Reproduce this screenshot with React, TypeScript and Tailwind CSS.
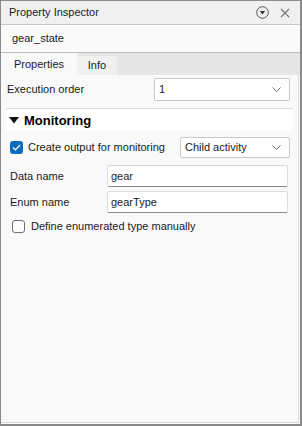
import React from 'react';

const font = { fontFamily: '"Liberation Sans", Arial, sans-serif' };

const Chevron: React.FC = () => (
  <svg width="9" height="5" viewBox="0 0 9 5" className="text-[#707070]">
    <path d="M0.5 0.5 L4.5 4.5 L8.5 0.5" fill="none" stroke="currentColor" strokeWidth="1" />
  </svg>
);

const Select: React.FC<{ value: string; className: string }> = ({ value, className }) => (
  <div
    className={`flex items-center justify-between border border-[#c9c9c9] rounded-[2px] bg-white pl-[4px] pr-[8px] ${className}`}
  >
    <span>{value}</span>
    <Chevron />
  </div>
);

const TextField: React.FC<{ value: string }> = ({ value }) => (
  <div className="flex items-center h-[22px] w-[181px] bg-white border border-[#dcdcdc] border-b-[#8a8a8a] rounded-[2px] pl-[3px]">
    {value}
  </div>
);

export default function App() {
  return (
    <div
      style={font}
      className="w-[302px] h-[426px] flex flex-col bg-[#f9f9f9] border-l border-t border-r-2 border-b-2 border-[#8a8a8a] text-[11px] text-[#1a1a1a] overflow-hidden"
    >
      <div className="h-[24px] flex items-center justify-between bg-[#f0f0f0] border-b border-[#c8c8c8] pl-[8px] pr-[10px]">
        <span>Property Inspector</span>
        <div className="flex items-center gap-[11px]">
          <svg width="13" height="13" viewBox="0 0 13 13">
            <circle cx="6.5" cy="6.5" r="5.8" fill="none" stroke="#555" strokeWidth="1" />
            <path d="M3.8 5 L9.2 5 L6.5 8.6 Z" fill="#333" />
          </svg>
          <svg width="10" height="10" viewBox="0 0 10 10">
            <path d="M1 1 L9 9 M9 1 L1 9" stroke="#777" strokeWidth="1.2" />
          </svg>
        </div>
      </div>

      <div className="h-[28px] flex items-center bg-[#fafafa] border-b border-[#c0c0c0] pl-[11px]">
        gear_state
      </div>

      <div className="h-[22px] flex items-end bg-[#e6e6e6]">
        <div className="h-[22px] w-[76px] flex items-center justify-center bg-[#f9f9f9]">Properties</div>
        <div className="h-[19px] w-[40px] flex items-center justify-center bg-[#f0f0f0]">Info</div>
      </div>

      <div className="flex-1 flex flex-col border-r border-b border-[#dcdcdc] mr-[1px] mb-[1px]">
        <div className="flex items-center justify-between pl-[6px] pr-[8px] pt-[3px]">
          <span>Execution order</span>
          <Select value="1" className="w-[136px] h-[23px]" />
        </div>

        <div className="mx-[5px] mt-[7px] border-t border-[#dedede]" />

        <div className="mx-[5px] mt-[1px] h-[21px] flex items-center bg-white pl-[3px] gap-[5px]">
          <svg width="10" height="7" viewBox="0 0 10 7">
            <path d="M0 0 L10 0 L5 6.5 Z" fill="#111" />
          </svg>
          <span className="text-[13px] font-bold text-black">Monitoring</span>
        </div>

        <div className="flex items-center justify-between pl-[9px] pr-[8px] mt-[6px]">
          <div className="flex items-center gap-[5px]">
            <div className="w-[13px] h-[13px] rounded-[3px] bg-[#0f6cbd] flex items-center justify-center">
              <svg width="9" height="7" viewBox="0 0 9 7">
                <path d="M1 3.5 L3.4 5.8 L8 1" fill="none" stroke="white" strokeWidth="1.2" />
              </svg>
            </div>
            <span className="whitespace-nowrap">Create output for monitoring</span>
          </div>
          <Select value="Child activity" className="w-[110px] h-[21px]" />
        </div>

        <div className="flex items-center justify-between pl-[9px] pr-[10px] mt-[7px]">
          <span>Data name</span>
          <TextField value="gear" />
        </div>

        <div className="flex items-center justify-between pl-[9px] pr-[10px] mt-[4px]">
          <span>Enum name</span>
          <TextField value="gearType" />
        </div>

        <div className="flex items-center gap-[6px] pl-[11px] mt-[5px]">
          <div className="w-[13px] h-[13px] rounded-[3px] border border-[#6e6e6e] bg-white" />
          <span>Define enumerated type manually</span>
        </div>
      </div>
    </div>
  );
}
